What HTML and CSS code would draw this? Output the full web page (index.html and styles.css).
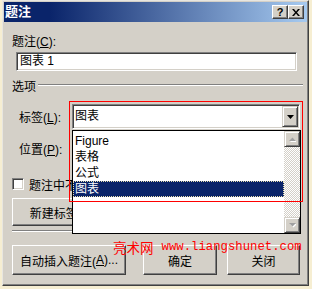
FILE: index.html
```html
<!DOCTYPE html>
<html lang="zh-CN">
<head>
    <meta charset="UTF-8">
    <meta name="viewport" content="width=device-width, initial-scale=1.0">
    <title>题注</title>
    <link rel="stylesheet" href="styles.css">
</head>
<body>
<div class="window">
    <div class="titlebar">
        <span class="title">题注</span>
        <div class="title-btns">
            <span class="tbtn">?</span>
            <span class="tbtn">
                <svg width="8" height="7" viewBox="0 0 8 7"><path d="M0 0h2l2 2.4 2-2.4h2L5 3.5 8 7H6L4 4.6 2 7H0l3-3.5z" fill="#000"/></svg>
            </span>
        </div>
    </div>

    <div class="content">
        <div class="cap-label">题注(<u>C</u>):</div>
        <div class="textbox">图表 1</div>

        <div class="group-head"><span>选项</span><span class="etch"></span></div>

        <div class="field">
            <span class="field-label">标签(<u>L</u>):</span>
            <div class="combo">
                <span class="combo-text">图表</span>
                <span class="drop-btn"><svg width="7" height="4" viewBox="0 0 7 4"><path d="M0 0h7L3.5 4z" fill="#000"/></svg></span>
            </div>
        </div>
        <div class="field field-pos">
            <span class="field-label">位置(<u>P</u>):</span>
            <!-- hidden behind the open list -->
            <div class="combo">
                <span class="combo-text"></span>
                <span class="drop-btn"><svg width="7" height="4" viewBox="0 0 7 4"><path d="M0 0h7L3.5 4z" fill="#000"/></svg></span>
            </div>
        </div>

        <div class="check-row"><span class="checkbox"></span>题注中不包含标签(<u>E</u>)</div>
        <div class="btn new-btn">新建标签(<u>N</u>)...</div>
        <div class="etch sep"></div>

        <div class="btn-row">
            <div class="btn btn-auto">自动插入题注(<u>A</u>)...</div>
            <div class="btn btn-ok">确定</div>
            <div class="btn btn-close">关闭</div>
        </div>
    </div>

    <!-- open drop-down of the label combo -->
    <div class="dropdown">
        <ul class="options">
            <li>Figure</li>
            <li>表格</li>
            <li>公式</li>
            <li class="selected">图表</li>
        </ul>
        <div class="scrollbar">
            <span class="sb-btn"><svg width="7" height="5" viewBox="0 0 7 5"><path d="M1 5h7L4.5 1.5z" fill="#fff"/><path d="M0 4h7L3.5 0.5z" fill="#a0a0a0"/></svg></span>
            <span class="sb-track"></span>
            <span class="sb-btn"><svg width="7" height="5" viewBox="0 0 7 5"><path d="M1 1h7L4.5 4.5z" fill="#fff"/><path d="M0 0h7L3.5 3.5z" fill="#a0a0a0"/></svg></span>
        </div>
    </div>

    <div class="mark-box"></div>
    <div class="watermark"><span class="wm-name">亮术网</span><span class="wm-url">www.liangshunet.com</span></div>
</div>
</body>
</html>
```

FILE: styles.css
```css
* {
    box-sizing: border-box;
}
body {
    margin: 0;
    width: 312px;
    height: 289px;
    overflow: hidden;
    background: #f6eed2;
    font-family: "Liberation Sans", "Noto Sans CJK SC", sans-serif;
    font-size: 12px;
    color: #000;
}
.window {
    position: relative;
    margin-left: 2px;
    width: 307px;
    height: 286px;
    padding: 1px;
    background: #d4d0c8;
    border: 1px solid;
    border-color: #e8e6e0 #404040 #404040 #e8e6e0;
    box-shadow: inset -1px -1px #808080;
}
.titlebar {
    height: 20px;
    display: flex;
    align-items: center;
    justify-content: space-between;
    padding: 0 3px 0 1px;
    background: linear-gradient(to right, #0a246a 15%, #a6caf0);
}
.title {
    color: #fff;
    font-weight: bold;
    font-size: 13px;
    line-height: 20px;
}
.title-btns {
    display: flex;
}
.tbtn {
    width: 16px;
    height: 14px;
    display: flex;
    align-items: center;
    justify-content: center;
    background: #d4d0c8;
    border: 1px solid;
    border-color: #fff #404040 #404040 #fff;
    box-shadow: inset -1px -1px #808080;
    font-weight: bold;
    font-size: 11px;
    line-height: 12px;
}

.content {
    padding: 0 6px 0 8px;
}
.cap-label {
    margin-top: 12px;
    height: 17px;
    line-height: 17px;
}
.textbox {
    margin: 1px 0 0 4px;
    width: 281px;
    height: 19px;
    padding-left: 3px;
    line-height: 17px;
    background: #fff;
    border: 1px solid;
    border-color: #808080 #fff #fff #808080;
    box-shadow: inset 1px 1px #404040, inset -1px -1px #d4d0c8;
}
.group-head {
    margin-top: 6px;
    margin-right: -2px;
    height: 16px;
    display: flex;
    align-items: center;
}
.etch {
    height: 2px;
    border-top: 1px solid #808080;
    border-bottom: 1px solid #fff;
}
.group-head .etch {
    flex: 1;
    margin-left: 2px;
}
.field {
    margin-top: 11px;
    height: 25px;
    display: flex;
    align-items: center;
}
.field-pos {
    margin-top: 7px;
}
.field-label {
    width: 60px;
    padding-left: 7px;
}
.combo {
    width: 228px;
    height: 25px;
    display: flex;
    align-items: stretch;
    padding: 1px;
    background: #fff;
    border: 1px solid;
    border-color: #808080 #fff #fff #808080;
    box-shadow: inset 1px 1px #404040, inset -1px -1px #d4d0c8;
}
.combo-text {
    flex: 1;
    padding-left: 1px;
    line-height: 21px;
}
.drop-btn {
    width: 16px;
    display: flex;
    align-items: center;
    justify-content: center;
    background: #d4d0c8;
    border: 1px solid;
    border-color: #d4d0c8 #404040 #404040 #d4d0c8;
    box-shadow: inset 1px 1px #fff, inset -1px -1px #808080;
}
.check-row {
    margin-top: 15px;
    height: 16px;
    display: flex;
    align-items: center;
    white-space: nowrap;
}
.checkbox {
    width: 12px;
    height: 12px;
    margin-right: 5px;
    background: #fff;
    border: 1px solid;
    border-color: #808080 #fff #fff #808080;
    box-shadow: inset 1px 1px #404040, inset -1px -1px #d4d0c8;
}
.btn {
    display: flex;
    align-items: center;
    justify-content: center;
    white-space: nowrap;
    background: #d4d0c8;
    border: 1px solid;
    border-color: #fff #404040 #404040 #fff;
    box-shadow: inset -1px -1px #808080;
}
.new-btn {
    margin-top: 6px;
    width: 110px;
    height: 28px;
}
.sep {
    margin-top: 4px;
}
.btn-row {
    margin-top: 13px;
    display: flex;
}
.btn-row .btn {
    height: 30px;
}
.btn-auto {
    width: 114px;
}
.btn-ok {
    width: 74px;
    margin-left: 17px;
}
.btn-close {
    width: 73px;
    margin-left: 10px;
}

.dropdown {
    position: absolute;
    left: 69px;
    top: 129px;
    width: 229px;
    height: 104px;
    display: flex;
    background: #fff;
    border: 1px solid #000;
    z-index: 2;
}
.options {
    flex: 1;
    margin: 0;
    padding: 2px 0 0;
    list-style: none;
}
.options li {
    height: 16px;
    line-height: 16px;
    padding-left: 2px;
}
.options .selected {
    background: #0a246a;
    color: #fff;
    outline: 1px dotted #e8e0b0;
    outline-offset: -1px;
}
.scrollbar {
    width: 16px;
    display: flex;
    flex-direction: column;
}
.sb-btn {
    height: 16px;
    display: flex;
    align-items: center;
    justify-content: center;
    background: #d4d0c8;
    border: 1px solid;
    border-color: #d4d0c8 #404040 #404040 #d4d0c8;
    box-shadow: inset 1px 1px #fff, inset -1px -1px #808080;
}
.sb-track {
    flex: 1;
    background: repeating-conic-gradient(#fff 0 25%, #d4d0c8 0 50%) 0 0 / 2px 2px;
}

.mark-box {
    position: absolute;
    left: 66px;
    top: 100px;
    width: 234px;
    height: 101px;
    border: 1px solid #f00;
    z-index: 3;
}
.watermark {
    position: absolute;
    left: 110px;
    top: 238px;
    display: flex;
    align-items: center;
    height: 16px;
    line-height: 14px;
    color: #f00;
    white-space: nowrap;
    z-index: 3;
}
.wm-name {
    font-family: "Noto Sans CJK SC", sans-serif;
    font-size: 13.5px;
    margin-right: 8px;
}
.wm-url {
    font-family: "Liberation Mono", monospace;
    font-size: 12.3px;
}
```
